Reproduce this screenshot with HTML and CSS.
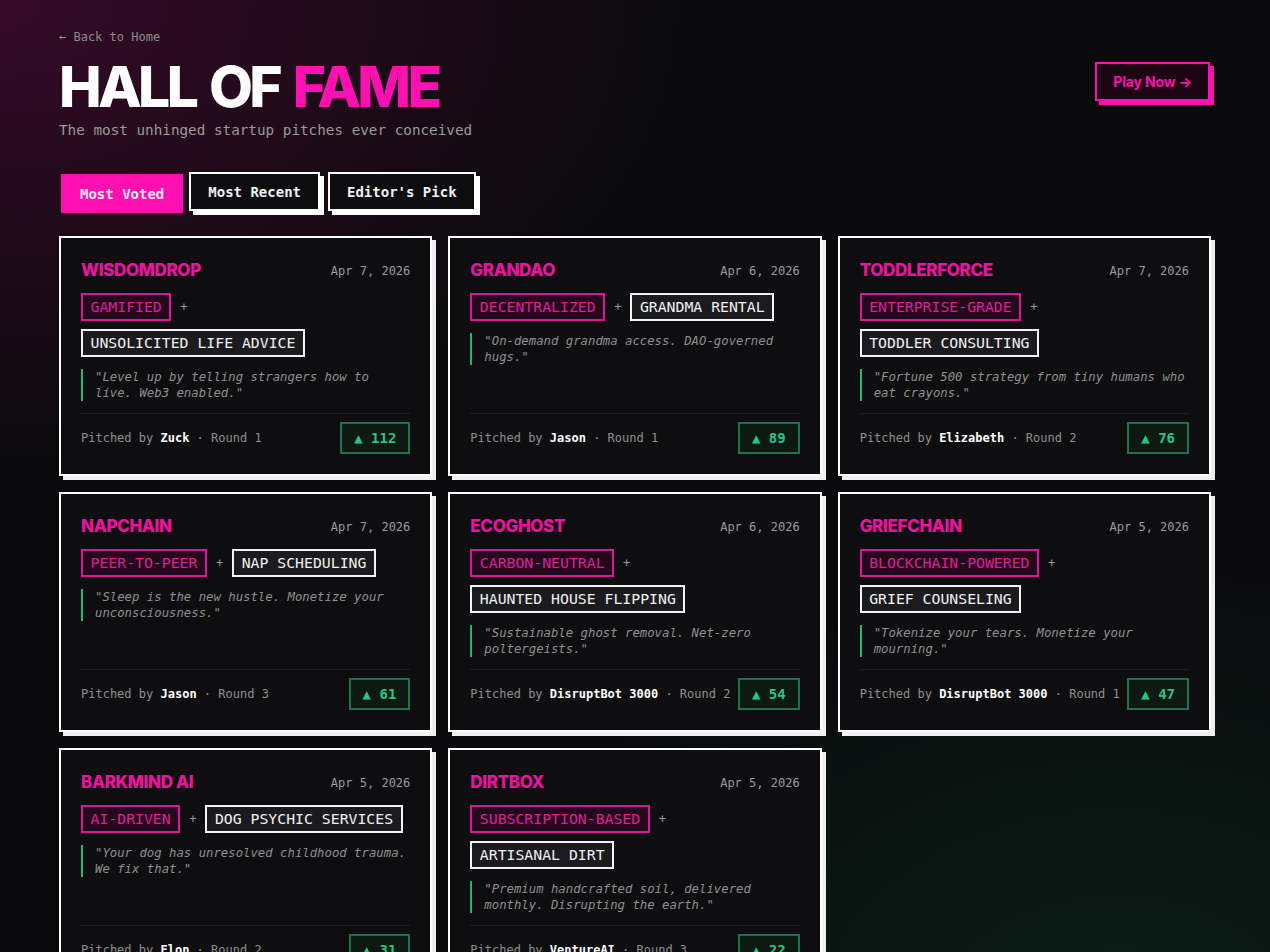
FILE: index.html
```html
<!DOCTYPE html>
<html lang="en">
<head>
<meta charset="utf-8">
<title>Hall of Fame</title>
<link rel="stylesheet" href="styles.css">
</head>
<body>
<div class="page">
  <header class="header">
    <div class="header-left">
      <a class="back" href="#">← Back to Home</a>
      <h1 class="title">HALL OF <span class="accent">FAME</span></h1>
      <p class="subtitle">The most unhinged startup pitches ever conceived</p>
    </div>
    <a class="play" href="#">Play Now →</a>
  </header>

  <nav class="tabs">
    <button class="tab active">Most Voted</button>
    <button class="tab">Most Recent</button>
    <button class="tab">Editor's Pick</button>
  </nav>

  <main class="grid">
    <article class="card">
      <div class="card-head"><h2 class="name">WISDOMDROP</h2><span class="date">Apr 7, 2026</span></div>
      <div class="tags"><span class="tag buzz">GAMIFIED</span><span class="plus">+</span><span class="tag thing">UNSOLICITED LIFE ADVICE</span></div>
      <p class="quote">"Level up by telling strangers how to live. Web3 enabled."</p>
      <div class="foot"><span class="by">Pitched by <b>Zuck</b> · Round 1</span><span class="vote">▲ 112</span></div>
    </article>
    <article class="card">
      <div class="card-head"><h2 class="name">GRANDAO</h2><span class="date">Apr 6, 2026</span></div>
      <div class="tags"><span class="tag buzz">DECENTRALIZED</span><span class="plus">+</span><span class="tag thing">GRANDMA RENTAL</span></div>
      <p class="quote">"On-demand grandma access. DAO-governed hugs."</p>
      <div class="foot"><span class="by">Pitched by <b>Jason</b> · Round 1</span><span class="vote">▲ 89</span></div>
    </article>
    <article class="card">
      <div class="card-head"><h2 class="name">TODDLERFORCE</h2><span class="date">Apr 7, 2026</span></div>
      <div class="tags"><span class="tag buzz">ENTERPRISE-GRADE</span><span class="plus">+</span><span class="tag thing">TODDLER CONSULTING</span></div>
      <p class="quote">"Fortune 500 strategy from tiny humans who eat crayons."</p>
      <div class="foot"><span class="by">Pitched by <b>Elizabeth</b> · Round 2</span><span class="vote">▲ 76</span></div>
    </article>
    <article class="card">
      <div class="card-head"><h2 class="name">NAPCHAIN</h2><span class="date">Apr 7, 2026</span></div>
      <div class="tags"><span class="tag buzz">PEER-TO-PEER</span><span class="plus">+</span><span class="tag thing">NAP SCHEDULING</span></div>
      <p class="quote">"Sleep is the new hustle. Monetize your unconsciousness."</p>
      <div class="foot"><span class="by">Pitched by <b>Jason</b> · Round 3</span><span class="vote">▲ 61</span></div>
    </article>
    <article class="card">
      <div class="card-head"><h2 class="name">ECOGHOST</h2><span class="date">Apr 6, 2026</span></div>
      <div class="tags"><span class="tag buzz">CARBON-NEUTRAL</span><span class="plus">+</span><span class="tag thing">HAUNTED HOUSE FLIPPING</span></div>
      <p class="quote">"Sustainable ghost removal. Net-zero poltergeists."</p>
      <div class="foot"><span class="by">Pitched by <b>DisruptBot 3000</b> · Round 2</span><span class="vote">▲ 54</span></div>
    </article>
    <article class="card">
      <div class="card-head"><h2 class="name">GRIEFCHAIN</h2><span class="date">Apr 5, 2026</span></div>
      <div class="tags"><span class="tag buzz">BLOCKCHAIN-POWERED</span><span class="plus">+</span><span class="tag thing">GRIEF COUNSELING</span></div>
      <p class="quote">"Tokenize your tears. Monetize your mourning."</p>
      <div class="foot"><span class="by">Pitched by <b>DisruptBot 3000</b> · Round 1</span><span class="vote">▲ 47</span></div>
    </article>
    <article class="card">
      <div class="card-head"><h2 class="name">BARKMIND AI</h2><span class="date">Apr 5, 2026</span></div>
      <div class="tags"><span class="tag buzz">AI-DRIVEN</span><span class="plus">+</span><span class="tag thing">DOG PSYCHIC SERVICES</span></div>
      <p class="quote">"Your dog has unresolved childhood trauma. We fix that."</p>
      <div class="foot"><span class="by">Pitched by <b>Elon</b> · Round 2</span><span class="vote">▲ 31</span></div>
    </article>
    <article class="card">
      <div class="card-head"><h2 class="name">DIRTBOX</h2><span class="date">Apr 5, 2026</span></div>
      <div class="tags"><span class="tag buzz">SUBSCRIPTION-BASED</span><span class="plus">+</span><span class="tag thing">ARTISANAL DIRT</span></div>
      <p class="quote">"Premium handcrafted soil, delivered monthly. Disrupting the earth."</p>
      <div class="foot"><span class="by">Pitched by <b>VentureAI</b> · Round 3</span><span class="vote">▲ 22</span></div>
    </article>
  </main>
</div>
</body>
</html>
```
FILE: styles.css
```css
* { box-sizing: border-box; }

html, body {
  margin: 0;
  padding: 0;
}

body {
  min-height: 952px;
  background-color: #0a0a0c;
  background-image:
    radial-gradient(ellipse 680px 460px at 0% 0%, rgba(120, 10, 80, 0.4), rgba(120, 10, 80, 0) 100%),
    radial-gradient(ellipse 640px 460px at 88% 100%, rgba(16, 120, 70, 0.2), rgba(16, 120, 70, 0) 100%);
  background-repeat: no-repeat;
  color: #f2f2f2;
  font-family: "DejaVu Sans Mono", "Liberation Mono", monospace;
}

.page {
  max-width: 1152px;
  margin: 0 auto;
  padding: 28px 0 40px;
}

.header {
  display: flex;
  justify-content: space-between;
  align-items: flex-start;
}

.back {
  display: block;
  color: #8c8c8c;
  font-size: 12px;
  line-height: 18px;
  text-decoration: none;
}

.title {
  margin: 12px 0 0;
  font-family: Inter, "Liberation Sans", sans-serif;
  font-weight: 800;
  font-size: 57px;
  line-height: 58px;
  letter-spacing: -0.065em;
  word-spacing: 5px;
  color: #ffffff;
}

.accent { color: #ff10b0; }

.subtitle {
  margin: 4px 0 0;
  font-size: 14.3px;
  line-height: 20px;
  color: #9a9a9a;
}

.play {
  margin-top: 34px;
  margin-right: 1px;
  display: inline-block;
  padding: 0 16px;
  height: 39px;
  line-height: 35px;
  border: 2px solid #ff10b0;
  background: #1c0413;
  box-shadow: 4px 4px 0 #ff10b0;
  color: #ff10b0;
  font-family: Inter, "Liberation Sans", sans-serif;
  font-weight: 700;
  font-size: 14px;
  letter-spacing: -0.01em;
  text-decoration: none;
}

.tabs {
  display: flex;
  gap: 8px;
  margin-top: 32px;
  margin-bottom: 25px;
}

.tab {
  height: 39px;
  padding: 0 17px;
  border: 2px solid #ffffff;
  background: #0d0d10;
  box-shadow: 4px 4px 0 #ffffff;
  color: #f2f2f2;
  font-family: "DejaVu Sans Mono", "Liberation Mono", monospace;
  font-weight: 700;
  font-size: 14px;
  cursor: pointer;
}

.tab.active {
  background: #ff10b0;
  border-color: #ff10b0;
  color: #ffe6f6;
  box-shadow: none;
  transform: translate(2px, 2px);
}

.grid {
  display: grid;
  grid-template-columns: repeat(3, 1fr);
  gap: 16px;
}

.card {
  display: flex;
  flex-direction: column;
  min-height: 240px;
  padding: 20px;
  border: 2px solid #ffffff;
  background: #0e0e11;
  box-shadow: 4px 4px 0 #f0f0f0;
}

.card-head {
  display: flex;
  justify-content: space-between;
  align-items: center;
  height: 22px;
  padding-top: 1px;
}

.name {
  margin: 0;
  font-family: Inter, "Liberation Sans", sans-serif;
  font-weight: 800;
  font-size: 17px;
  line-height: 22px;
  letter-spacing: -0.02em;
  color: #f0129f;
}

.date {
  font-size: 12px;
  color: #9a9a9a;
  padding-top: 2px;
}

.tags {
  display: flex;
  flex-wrap: wrap;
  align-items: center;
  column-gap: 9px;
  row-gap: 8px;
  margin-top: 13px;
}

.tag {
  display: inline-block;
  padding: 3px 7.5px;
  font-size: 14.8px;
  line-height: 18px;
  border: 2px solid;
  white-space: nowrap;
}

.buzz {
  border-color: #dc169c;
  color: #e01a9f;
  background: #230a1b;
}

.thing {
  border-color: #f4f4f4;
  color: #f0f0f0;
  background: #1b1b1f;
}

.plus {
  font-size: 12px;
  color: #9a9a9a;
}

.quote {
  margin: 12px 0 12px;
  padding-left: 12px;
  border-left: 2px solid #1fb877;
  font-style: italic;
  font-size: 12.3px;
  line-height: 16px;
  color: #8e8e8e;
}

.foot {
  margin-top: auto;
  display: flex;
  justify-content: space-between;
  align-items: center;
  padding-top: 8px;
  border-top: 1px solid #1e1e23;
  white-space: nowrap;
}

.by {
  font-size: 12px;
  color: #8e8e8e;
}

.by b {
  color: #ffffff;
  font-weight: 700;
}

.vote {
  display: inline-block;
  height: 32px;
  padding: 0 12px;
  line-height: 28px;
  border: 2px solid #1d7350;
  background: #0d1a14;
  color: #22c982;
  font-weight: 700;
  font-size: 14px;
}
```
